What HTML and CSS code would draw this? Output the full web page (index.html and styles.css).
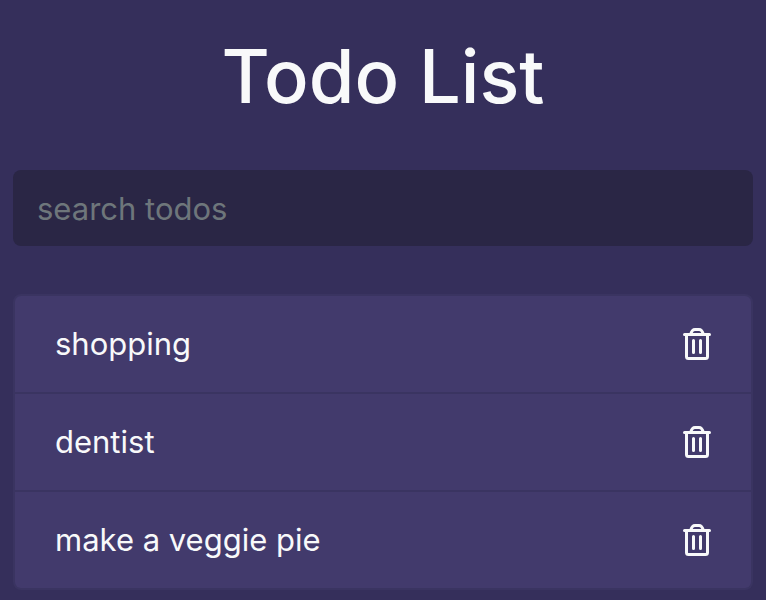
FILE: index.html
```html
<!DOCTYPE html>
<html lang="en">
<head>
<meta charset="utf-8">
<title>Todo List</title>
<link rel="stylesheet" href="styles.css">
</head>
<body>
<main class="container">
  <header class="header">
    <h1 class="title">Todo List</h1>
    <form class="search">
      <input class="search-input" type="text" name="search" placeholder="search todos" aria-label="search todos">
    </form>
  </header>
  <ul class="todos">
    <li class="todo"><span>shopping</span>
      <button class="delete" type="button" aria-label="Delete shopping"><svg class="icon" viewBox="0 0 28 32" aria-hidden="true"><path d="M1.500 6.500h25M7.800 6Q9 1.500 12 1.500h4Q19 1.500 20.200 6M3.500 6.500V28.500q0 2 2 2h17q2 0 2-2V6.500M10.500 12.500v12M17.500 12.500v12"/></svg></button></li>
    <li class="todo"><span>dentist</span>
      <button class="delete" type="button" aria-label="Delete dentist"><svg class="icon" viewBox="0 0 28 32" aria-hidden="true"><path d="M1.500 6.500h25M7.800 6Q9 1.500 12 1.500h4Q19 1.500 20.200 6M3.500 6.500V28.500q0 2 2 2h17q2 0 2-2V6.500M10.500 12.500v12M17.500 12.500v12"/></svg></button></li>
    <li class="todo"><span>make a veggie pie</span>
      <button class="delete" type="button" aria-label="Delete make a veggie pie"><svg class="icon" viewBox="0 0 28 32" aria-hidden="true"><path d="M1.500 6.500h25M7.800 6Q9 1.500 12 1.500h4Q19 1.500 20.200 6M3.500 6.500V28.500q0 2 2 2h17q2 0 2-2V6.500M10.500 12.500v12M17.500 12.500v12"/></svg></button></li>
  </ul>
</main>
</body>
</html>
```
FILE: styles.css
```css
* { box-sizing: border-box; }
body {
  margin: 0;
  background: #352f5b;
  color: #f8f9fa;
  font-family: Inter, "Liberation Sans", sans-serif;
  font-size: 31px;
  line-height: 48px;
}
.container { padding: 28px 13px 10px; }
.title {
  margin: 0 0 46px;
  font-size: 74px;
  line-height: 96px;
  font-weight: 500;
  text-align: center;
}
.search { margin: 0 0 48px; }
.search-input {
  display: block;
  width: 100%;
  height: 76px;
  padding: 12px 24px;
  border: 0;
  border-radius: 8px;
  background: #2a2645;
  color: #f8f9fa;
  font: inherit;
}
.search-input::placeholder { color: #6e767b; opacity: 1; }
.todos { margin: 0; padding: 0; list-style: none; }
.todo {
  display: flex;
  align-items: center;
  justify-content: space-between;
  padding: 24px 40px;
  border: 2px solid #3a3461;
  background: #423a6c;
}
.todo + .todo { border-top: 0; }
.todo:first-child { border-radius: 8px 8px 0 0; }
.todo:last-child { border-radius: 0 0 8px 8px; }
.delete {
  padding: 0;
  border: 0;
  background: none;
  color: inherit;
  cursor: pointer;
}
.icon {
  display: block;
  width: 28px;
  height: 32px;
  fill: none;
  stroke: currentColor;
  stroke-width: 3;
  stroke-linecap: round;
}
```
